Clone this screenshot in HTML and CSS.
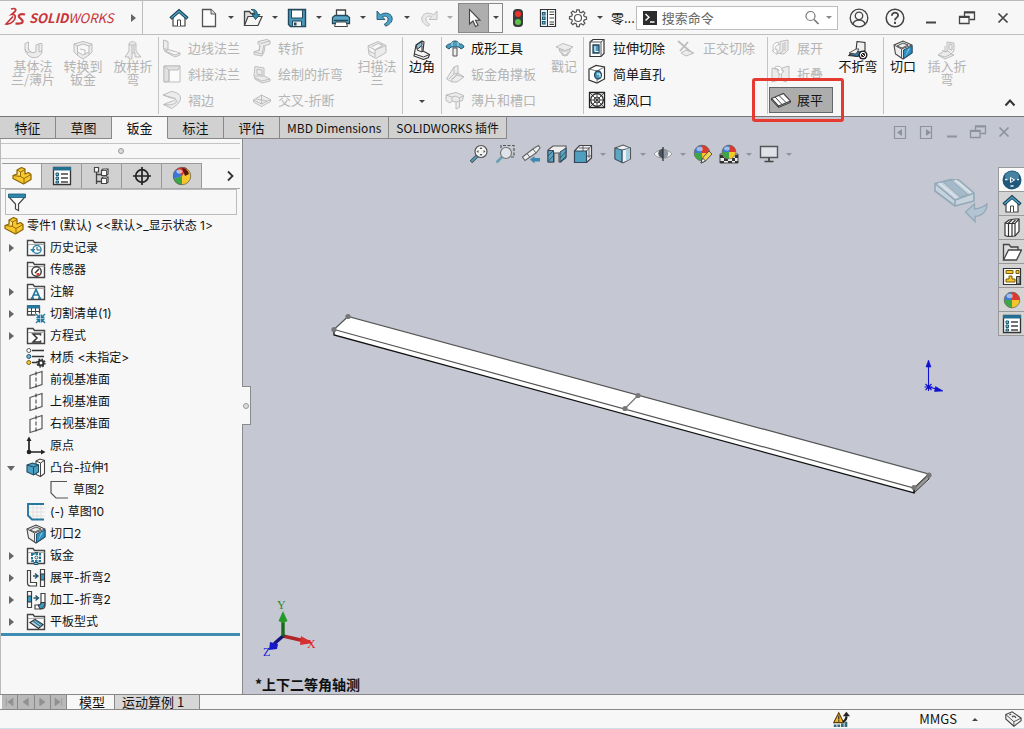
FILE: index.html
```html
<!DOCTYPE html>
<html lang="zh-CN">
<head>
<meta charset="utf-8">
<meta name="viewport" content="width=device-width, initial-scale=1">
<title>SOLIDWORKS</title>
<link rel="stylesheet" href="styles.css">
</head>
<body>
<svg class="sprite" aria-hidden="true">
  <!-- title bar -->
  <symbol id="i-home" viewBox="0 0 20 20"><path d="M4 9v9h12V9l-6-5z" fill="#fff" stroke="#444" stroke-width="1.2"/><path d="M8.500 18v-6h3v6" fill="#fff" stroke="#444"/><path d="M1.500 10.500 10 3l8.500 7.500" fill="none" stroke="#1b3f52" stroke-width="3.400"/><path d="M2.200 10 10 3.200 17.800 10" fill="none" stroke="#4a9fc4" stroke-width="1.500"/></symbol>
  <symbol id="i-new" viewBox="0 0 20 20"><path d="M3.500 1.500h8.500l4.500 4.500v12.500h-13z" fill="#fcfcfc" stroke="#555" stroke-width="1.300"/><path d="M12 1.500V6h4.500" fill="#ddd" stroke="#555"/></symbol>
  <symbol id="i-open" viewBox="0 0 20 20"><path d="M1.500 17.500V3.500h5l1.500 2h4v3" fill="#ddd" stroke="#444" stroke-width="1.300"/><path d="M1.500 17.500 5 8.500h14l-4 9z" fill="#f5f5f5" stroke="#444" stroke-width="1.200"/><path d="M8 1.500c4-.5 6 1 6.500 5h2.500l-4.500 5L9 6.500h2.500C11.500 4 10.500 2.500 8 1.500z" fill="#2f8ab0" stroke="#173f52" stroke-width=".8"/></symbol>
  <symbol id="i-save" viewBox="0 0 20 20"><path d="M1.500 1.500h17v17h-15l-2-2z" fill="#4799ba" stroke="#24495c" stroke-width="1.400"/><path d="M4.500 2h11v8h-11z" fill="#fff" stroke="#24495c"/><path d="M5.500 13h9v5.500h-9z" fill="#eee" stroke="#24495c"/><path d="M7 14.500h2.500v3H7z" fill="#24495c"/></symbol>
  <symbol id="i-print" viewBox="0 0 20 20"><path d="M5.500 9V2h9v7" fill="#fff" stroke="#444" stroke-width="1.300"/><path d="M1.500 9.500 4 7.500h12l2.500 2v6h-17z" fill="#5aa9c8" stroke="#24495c" stroke-width="1.300"/><path d="M3 12.500h14" stroke="#24495c" stroke-width="1.500"/><path d="m5 14-1.500 4.500h13L15 14z" fill="#fff" stroke="#444"/></symbol>
  <symbol id="i-undo" viewBox="0 0 20 20"><path d="M2 3v8.500h8L7.400 8.800c3-1.600 6.200.2 5.600 3.200-.3 1.800-2 3.200-3.600 4l1.200 2.200c4-1.500 6.600-4.200 6.600-7.400 0-5-6.200-7.600-11.800-4z" fill="#4ba3c7" stroke="#24556b" stroke-width=".9"/></symbol>
  <symbol id="i-redo" viewBox="0 0 20 20"><path d="M18 3v8.500h-8l2.600-2.700c-3-1.600-6.200.2-5.600 3.200.3 1.800 2 3.200 3.600 4l-1.200 2.200c-4-1.500-6.600-4.200-6.600-7.400 0-5 6.200-7.600 11.800-4z" fill="#e8e8e8" stroke="#c2c2c2"/></symbol>
  <symbol id="i-cursor" viewBox="0 0 20 20"><path d="M5.500 1.500v14.500l3.500-3 2.500 5.500 2.500-1.200-2.500-5h4.500z" fill="#fff" stroke="#444" stroke-width="1.100"/></symbol>
  <symbol id="i-traffic" viewBox="0 0 20 20"><rect x="5" y="1" width="10" height="18" rx="4" fill="#3c3c3c"/><circle cx="10" cy="6" r="3" fill="#f0322a"/><circle cx="10" cy="14" r="3" fill="#5cc24b"/></symbol>
  <symbol id="i-list" viewBox="0 0 20 20"><path d="M2.500 1.500h15v17h-15z" fill="#fff" stroke="#333" stroke-width="1.200"/><path d="M3 2h6v16H3z" fill="#e2eff5"/><path d="M9.500 2v16" stroke="#333"/><path d="M4.500 4.500H7V7H4.500zM4.500 9H7v2.500H4.500zM4.500 13.500H7V16H4.500z" fill="#8cc4da" stroke="#1c5874" stroke-width="1.200"/><path d="M11.500 4h4.500M11.500 6.500h4.500M11.500 10h4.500M11.500 14h4.500M11.500 16.300h4.500" stroke="#444" stroke-width="1.200"/></symbol>
  <symbol id="i-gear" viewBox="0 0 20 20"><path d="m8.400 4 .4-2.200h2.400l.4 2.200 1.700.7 1.900-1.300 1.700 1.700-1.300 1.900.7 1.600 2.200.5v2.200l-2.200.5-.7 1.600 1.300 1.900-1.700 1.700-1.900-1.300-1.700.7-.4 2.200H8.800L8.400 16l-1.700-.7-1.900 1.300-1.700-1.700 1.300-1.900-.7-1.600-2.200-.5V8.700l2.200-.5.700-1.600-1.300-1.900 1.700-1.700 1.900 1.300z" fill="#fff" stroke="#555" stroke-width="1.200"/><circle cx="10" cy="10" r="3.500" fill="#fff" stroke="#555" stroke-width="1.200"/></symbol>
  <symbol id="i-prompt" viewBox="0 0 14 14"><path d="M0 0h14v14H0z" fill="#2d2d2d"/><path d="m2.500 3 3.500 3.300L2.500 9.600M7 11h4.500" fill="none" stroke="#fff" stroke-width="1.400"/></symbol>
  <symbol id="i-search" viewBox="0 0 16 16"><circle cx="6.500" cy="6" r="4.500" fill="none" stroke="#777" stroke-width="1.200"/><path d="m10 9.500 4.500 4.500" stroke="#777" stroke-width="1.700"/></symbol>
  <symbol id="i-user" viewBox="0 0 20 20"><circle cx="10" cy="10" r="8" fill="none" stroke="#444" stroke-width="1.200"/><circle cx="10" cy="8" r="3.400" fill="none" stroke="#444" stroke-width="1.200"/><path d="M4.500 16c.5-3.500 3-4 5.500-4s5 .5 5.500 4" fill="none" stroke="#444" stroke-width="1.200"/></symbol>
  <symbol id="i-help" viewBox="0 0 20 20"><circle cx="10" cy="10" r="8" fill="none" stroke="#444" stroke-width="1.400"/><path d="M7.200 8c0-4 5.800-3.600 5.600-.3-.1 2-2.800 2-2.800 4.300M10 13.500v2" fill="none" stroke="#444" stroke-width="1.700"/></symbol>
  <symbol id="i-min" viewBox="0 0 20 20"><path d="M5 14.500h10" stroke="currentColor" stroke-width="2"/></symbol>
  <symbol id="i-restore" viewBox="0 0 20 20"><path d="M7.500 8V4.500h10v7h-5" fill="none" stroke="currentColor" stroke-width="1.300"/><path d="M7 4.300h11" stroke="currentColor" stroke-width="2"/><path d="M2.500 8.500h9.500v7H2.500z" fill="none" stroke="currentColor" stroke-width="1.300"/><path d="M2 9h10.500" stroke="currentColor" stroke-width="2"/></symbol>
  <symbol id="i-close" viewBox="0 0 20 20"><path d="m5.500 5.500 9 9m0-9-9 9" stroke="currentColor" stroke-width="1.700"/></symbol>
  <symbol id="i-prev" viewBox="0 0 20 20"><path d="M4.500 4.500h11v12h-11z" fill="none" stroke="currentColor" stroke-width="1.200"/><path d="M12 7v7l-5-3.500z" fill="currentColor"/></symbol>
  <symbol id="i-next" viewBox="0 0 20 20"><path d="M4.500 4.500h11v12h-11z" fill="none" stroke="currentColor" stroke-width="1.200"/><path d="M10 7v7l5-3.500z" fill="currentColor"/></symbol>

  <!-- ribbon, unavailable commands: painted by the disabled button's fill and stroke -->
  <symbol id="r-base" viewBox="0 0 20 20"><path d="M2 3.500 5.500 2v7c.5 3 4 5 7.500 2.500V5L17 3.500h2V12c-1.500 5.500-9 8-14 3-2-2-3-4-3-6z"/><path d="M5.500 2v7c2 4.500 6 4 7.500 2.500M2 9c1 3 2.500 4 4.500 3.500M16 4v8l3-1" fill="none"/></symbol>
  <symbol id="r-convert" viewBox="0 0 20 20"><path d="m1 4 9-2.500L19 4v8l-3 3-6 4-6-4-3-3z"/><path d="M4.500 6 10 4l6 2v6l-6 3-5.500-3zM1 4l3.500 2M19 4l-3 2M4.500 12v3M16 12v3M7 9l5 1v5" fill="#f7f7f7"/></symbol>
  <symbol id="r-loft" viewBox="0 0 20 20"><path d="M6 4c0-3 7-3 7 0v7l5 6h-6v-4h-3v6H6v-2H2l4-6z"/><path d="M6 4c1 1.500 6 1.500 7 0M9 5v8M11 5v8" fill="none"/></symbol>
  <symbol id="r-edge" viewBox="0 0 20 20"><path d="M1.500 2 6 3.500v8l12 3.500v2l-5 2-10-5.500-1.500-3z"/><path d="m6 11.500-4.500-.8M6 11.500 3 13.500M18 15l-5 2-10-4" fill="#fafafa"/></symbol>
  <symbol id="r-miter" viewBox="0 0 20 20"><path d="M2 2h16v16H2z" fill="#fbfbfb"/><path d="M2 2h16l-2 4H7v11l-5 1z" fill="#e2e2e2"/><path d="m2 2 5 4M7 6v12" fill="none"/></symbol>
  <symbol id="r-hem" viewBox="0 0 20 20"><path d="m1 5 8-3.500c6 .5 9.500 3 9.500 6.500 0 5-5 8-9 10.500l-8-4 9-3.500c3-1 4-2.500 1-3z"/><path d="m1 5 8 3c4 0 6 1.500 5 3.500M1.500 14.500l6 .5c4-.5 7-2 8-4" fill="none"/></symbol>
  <symbol id="r-jog" viewBox="0 0 20 20"><path d="M6 3.500 15 1.500l3 1.500v3l-5 1.500-1 6.500-2 4-8-1.500v-3l5-1 1-5.500-2-1z"/><path d="m18 3-9 2.500-2-2M12 7l-2 9-8-2M8 8l-1 5" fill="none"/></symbol>
  <symbol id="r-sketchbend" viewBox="0 0 20 20"><path d="M3 2.500 12 4v8l6 3v2l-8 2-7-4-1-3z"/><path d="m5 5 5 1v5l-5-1zM3 12l9 0M3 14l7 3 8-2" fill="none"/></symbol>
  <symbol id="r-cross" viewBox="0 0 20 20"><path d="m1.500 10 8-5 9 4.500v2l-9 5-8-4.500z"/><path d="m1.500 10 8 4 9-4.500M9.500 5v9M4 9l11 2" fill="none"/></symbol>
  <symbol id="r-swept" viewBox="0 0 20 20"><path d="m1 6 10-4.500 8 4v7l-10 6-7-4z"/><path d="m1 6 7 4v7M8 10l8-5-5-1.500L5 6.500M8 10l11-4.500M2 11l6 3" fill="#f7f7f7"/></symbol>
  <symbol id="r-gusset" viewBox="0 0 20 20"><path d="m9 3 4-1.500V9l6 4-7 5H7l-5.500-3z"/><path d="M9 3v7l-5 5M13 9l-5 6M9 10l4-1M7 18v-3l5-4 7 2" fill="none"/></symbol>
  <symbol id="r-tab" viewBox="0 0 20 20"><path d="m1 5 10-2.500 7.500 3-1 5-3 1v6l-3.500 1.500v-7l-4-1-2 2L1 10.500z"/><path d="m1 5 6 2 4-1 3 2 4.500-2M7 7v4M11 12l3.500-1V8" fill="none"/></symbol>
  <symbol id="r-stamp" viewBox="0 0 20 20"><path d="m2 7 7-3.500L19 7l-7 4z"/><path d="m5 9 4 2 7-2v3l-5 3-5-3zM8 12v3l3 1 3-1v-2" fill="#ddd"/></symbol>
  <symbol id="r-normal" viewBox="0 0 20 20"><path d="m1 3 14 12M11 4 3 13" stroke-width="1.800" fill="none"/><path d="m9 12 8 3-8 3-5-3z"/></symbol>
  <symbol id="r-unfold" viewBox="0 0 20 20"><path d="M9 3.500 17 2v10l-4 4-8-1 4-3z"/><path d="M12 5v8l-3 2M14 4v9" fill="none"/><path d="M7 4C2 5 1 9 3 12l-2 .5 5 4V11l-1.500.5C3.500 9 5 7.500 8 6.500z" fill="#fff"/></symbol>
  <symbol id="r-fold" viewBox="0 0 20 20"><path d="m1 4 7 2v10l-7 2zM11 4l7-2v12l-3 4-5-2z"/><path d="M4 3c4-2 7 0 7 4h2l-3.500 4L6 7h2c0-2-2-3-4-2z" fill="#fff"/></symbol>
  <symbol id="r-insert" viewBox="0 0 20 20"><path d="m10 2 7 1v8l-3 3 3 1-9 4-7-4 6-4 3 1z"/><path d="m12 4 3 .5V10l-3-1zM10 10l4 4-6 3-7-2M8 6v6l-3-2" fill="none"/></symbol>

  <!-- ribbon, available commands -->
  <symbol id="r-corner" viewBox="0 0 20 20"><path d="M4 5 10 1l2 1-1 9 6.500 3.500-1 3-5 2L2 16z" fill="#f4f4f4" stroke="#333" stroke-width="1.100"/><path d="M4.500 5 10 1.500v4L5 9.500z" fill="#8cc4dc" stroke="#333"/><path d="m5 10 5 2 1-1M2.500 14l9 3 6-2.500M10 12v-6" fill="none" stroke="#333"/></symbol>
  <symbol id="r-form" viewBox="0 0 20 20"><path d="M1 9c1-3 3-3 4.500-3C7 2 13 2 14.500 6 16 6 18 6 19 9l-3 2-2-2H6l-2 2z" fill="#4a9dbf" stroke="#24556b"/><path d="M7 4v4M13 4v4" stroke="#bfe1ee"/><path d="M8 10h4v8H8z" fill="#eee" stroke="#555"/></symbol>
  <symbol id="r-extrude" viewBox="0 0 20 20"><path d="m3 4 3-2.500h11v14l-3 3H3z" fill="#fff" stroke="#333" stroke-width="1.200"/><path d="M3 4h11l3-2.500M14 4v14.500" fill="none" stroke="#555"/><path d="M6 7h6v8H6z" fill="#4b9dbf" stroke="#24465a" stroke-width="1.300"/><path d="M8 8v5.500h3.500" fill="none" stroke="#fff"/></symbol>
  <symbol id="r-hole" viewBox="0 0 20 20"><path d="m2 5 7-3.500L17.500 3v12L10 19l-8-3z" fill="#fff" stroke="#333" stroke-width="1.200"/><path d="m2 5 8 2 7.500-4M10 7v12" fill="none" stroke="#666" stroke-width=".9"/><ellipse cx="11" cy="11" rx="3.400" ry="4" fill="#4b9dbf" stroke="#24465a" stroke-width="1.300"/><path d="M10 10h3v3" stroke="#fff" fill="none"/></symbol>
  <symbol id="r-vent" viewBox="0 0 20 20"><path d="M2.500 2.500h15v15h-15z" fill="#fff" stroke="#222" stroke-width="1.300"/><circle cx="10" cy="10" r="6.300" fill="none" stroke="#222" stroke-width="1.200"/><circle cx="10" cy="10" r="3" fill="none" stroke="#222" stroke-width=".8"/><path d="M10 3v14M3 10h14M3 3l14 14M17 3 3 17" stroke="#222" stroke-width=".8"/></symbol>
  <symbol id="r-flatten" viewBox="0 0 20 20"><path d="m.5 8.500 12-5L19.500 11 7.500 16z" fill="#fff" stroke="#444" stroke-width="1.100"/><path d="m.5 8.500V10l7 7.500V16M7.500 17.500l12-5V11M4 7l7 7.500M8 5.500l7.500 7.500" fill="none" stroke="#444"/></symbol>
  <symbol id="r-nobend" viewBox="0 0 20 20"><path d="m9 1.500 8 1v8l-7 6-9-1 7-5z" fill="#f0f0f0" stroke="#333" stroke-width="1.100"/><path d="m1 14.500 7-3 6 .5-5 4.500z" fill="#2f7faf" stroke="#333"/><path d="m1 13 7-4h3l-3 5z" fill="#eee" stroke="#333" stroke-width=".8"/><circle cx="15" cy="15" r="4.500" fill="#222"/><circle cx="15" cy="15" r="2.700" fill="none" stroke="#fff"/><path d="m13 13 4 4" stroke="#fff"/></symbol>
  <symbol id="r-rip" viewBox="0 0 20 20"><path d="m1 5 9-4 9 4v8l-9 6-7.500-5z" fill="#eee" stroke="#444" stroke-width="1.100"/><path d="m1 5 7.500 4L19 5M8.500 9v9M4 6l6-3 5 2-6 3z" fill="#ddd" stroke="#555"/><path d="M10.500 18.500V10L19 6v7z" fill="#2f8fbe" stroke="#1f5573"/><path d="m12 17 3-8 2-.8z" fill="#8cc8e2"/></symbol>

  <!-- feature manager -->
  <symbol id="t-part" viewBox="0 0 20 20"><path d="m5 4 4.500-2.500L13 3v5l3.500-1.500L19 8.500v5L11.500 18 1 12.500V9.500L5 8z" fill="#f7c72e" stroke="#8a6208" stroke-width="1.200" stroke-linejoin="round"/><path d="m5 4 3.500 2L13 3.500M8.500 6v4.500l3.500 2L19 8.500M12 12.500v5M1 9.500 8.500 10.500" fill="none" stroke="#8a6208" stroke-width=".9"/><path d="m6 5 2 1.200v3L6 8.500z" fill="#fde58a"/></symbol>
  <symbol id="t-props" viewBox="0 0 20 20"><path d="M1.500 1.500h17v17h-17z" fill="#fff" stroke="#333" stroke-width="1.300"/><path d="M1 1h18v3.500H1z" fill="#236f92"/><path d="M4 7h2.500v2.500H4zM4 11h2.500v2.500H4zM4 15h2.500v2H4z" fill="#8cc4da" stroke="#1c5874"/><path d="M9 8h7M9 12h7M9 16h7" stroke="#444" stroke-width="1.300"/></symbol>
  <symbol id="t-config" viewBox="0 0 20 20"><path d="M4.500 6v12M4.500 8.500H10M4.500 15.500H10" fill="none" stroke="#444" stroke-width="1.300"/><path d="M2.500 1.500h4V6h-4zM9.500 4.500 11 3h5v5l-1.500 1.500h-5zM9.500 12.500 11 11h5v5l-1.500 1.500h-5z" fill="#fff" stroke="#444" stroke-width="1.200"/><path d="M9.500 4.500h5v5M14.500 4.500 16 3M9.500 12.500h5v5M14.500 12.500 16 11" fill="none" stroke="#444" stroke-width=".9"/></symbol>
  <symbol id="t-dim" viewBox="0 0 20 20"><circle cx="10" cy="10" r="6.300" fill="none" stroke="#222" stroke-width="1.700"/><path d="M10 1v18M1 10h18" stroke="#222" stroke-width="1.700"/></symbol>
  <symbol id="t-ball" viewBox="0 0 20 20"><circle cx="10" cy="10" r="9" fill="#f5c72b"/><path d="M3.500 4A9 9 0 0 1 15 2.500L10 10z" fill="#d8322c"/><path d="M10 10v9a9 9 0 0 1-8.500-6z" fill="#3aa648"/><path d="M1.500 13A9 9 0 0 1 5 3l5 7z" fill="#3b76d8"/><path d="M10 2a8 8 0 0 1 7 6l-4 2z" fill="#5c1712"/><circle cx="10" cy="10" r="8.700" fill="none" stroke="#666" stroke-width=".8"/><ellipse cx="7.500" cy="5.500" rx="3" ry="2" fill="#fff" opacity=".6"/></symbol>
  <symbol id="t-globe" viewBox="0 0 20 20"><circle cx="10" cy="10" r="8.800" fill="#f3c62a"/><path d="M10 10V1.200A8.800 8.800 0 0 0 1.200 10z" fill="#3f7ad6"/><path d="M10 10V1.200A8.800 8.800 0 0 1 18.800 10z" fill="#dc3a30"/><path d="M10 10H1.200A8.800 8.800 0 0 0 10 18.800z" fill="#3ca648"/><circle cx="10" cy="10" r="8.700" fill="none" stroke="#666" stroke-width=".8"/><ellipse cx="7.500" cy="5.500" rx="3.500" ry="2.500" fill="#fff" opacity=".5"/></symbol>
  <symbol id="t-filter" viewBox="0 0 20 20"><path d="M2 3h16v2l-6.500 7v6.500l-3-1.500v-5L2 5z" fill="#fff" stroke="#444" stroke-width="1.200"/><path d="M1.500 2h17v3.500h-17z" fill="#2e87ae" stroke="#1c5874" stroke-width=".8"/></symbol>
  <symbol id="t-folder" viewBox="0 0 20 20"><path d="M1.500 17.500v-15H7l1.500 2h10v13z" fill="#fafafa" stroke="#444" stroke-width="1.400"/><path d="M2 6.500h16.500" stroke="#aaa"/></symbol>
  <symbol id="t-history" viewBox="0 0 20 20"><use href="#t-folder"/><circle cx="11" cy="11.500" r="4" fill="#fff" stroke="#2e87ae" stroke-width="1.500"/><path d="M11 9v3h3" stroke="#24556b" fill="none"/><path d="m4 11 3 3.500 2.500-3.500z" fill="#2e87ae"/></symbol>
  <symbol id="t-sensor" viewBox="0 0 20 20"><use href="#t-folder"/><circle cx="10.500" cy="11.500" r="4.700" fill="#fff" stroke="#333" stroke-width="1.400"/><path d="m9 13 4-4" stroke="#333" stroke-width="1.500"/><path d="M10.500 13h3v2.500h-3z" fill="#d84a35"/></symbol>
  <symbol id="t-note" viewBox="0 0 20 20"><use href="#t-folder"/><path d="M6 16.200 10 7.500l4 8.700M7.500 13h5M4.800 16.200H8M12 16.200h3.200" fill="none" stroke="#24789d" stroke-width="1.600"/></symbol>
  <symbol id="t-cutlist" viewBox="0 0 20 20"><path d="M1.500 2h12v9h-12z" fill="#fff" stroke="#444" stroke-width="1.300"/><path d="M1 1h13v3.500H1z" fill="#24789d"/><path d="M1.500 7.500h12M5.500 4v7M9.500 4v7" stroke="#444"/><path d="M9.500 9.500H19V19H9.500z" fill="#f7f7f7"/><path d="m10 10 3.500 3.500m0-3v3h-3M19 10l-3.500 3.500m0-3v3h3M10 19l3.500-3.500m0 3v-3h-3M19 19l-3.500-3.500m0 3v-3h3" fill="none" stroke="#24789d" stroke-width="1.400"/></symbol>
  <symbol id="t-sigma" viewBox="0 0 20 20"><use href="#t-folder"/><path d="M14.500 9.500V8H7l4 4-4 4h7.500v-1.500" fill="none" stroke="#333" stroke-width="1.500"/></symbol>
  <symbol id="t-material" viewBox="0 0 20 20"><path d="M6 2.500h12M6 8.500h12M6 14.500h5" stroke="#333" stroke-width="1.700"/><circle cx="2.800" cy="2.500" r="2" fill="#fff" stroke="#555"/><circle cx="2.800" cy="8.500" r="2" fill="#6bb8d8" stroke="#24556b"/><circle cx="2.800" cy="14.500" r="2" fill="#f0ca3a" stroke="#7a6010"/><circle cx="15" cy="15" r="2.500" fill="#fff" stroke="#333" stroke-width="2.200"/><circle cx="15" cy="15" r="4" fill="none" stroke="#333" stroke-width="1.300" stroke-dasharray="1.600 1.540"/></symbol>
  <symbol id="t-plane" viewBox="0 0 20 20"><path d="M4 5.500 16 1.500v13L4 18.500z" fill="#fbfbfb" stroke="#555" stroke-width="1.200"/><path d="M10 1.500v17" stroke="#333" stroke-dasharray="4 2"/></symbol>
  <symbol id="t-origin" viewBox="0 0 20 20"><path d="M3 3v13h13" fill="none" stroke="#222" stroke-width="1.700"/><path d="M.5 5 3 .5 5.500 5zM15 13.500l4.500 2.500-4.500 2.500z" fill="#222"/><circle cx="3" cy="16" r="2.300" fill="#222"/></symbol>
  <symbol id="t-boss" viewBox="0 0 20 20"><path d="m10 3 4-2 4.500 1.500v13l-4 3-4.500-2z" fill="#fafafa" stroke="#444" stroke-width="1.100"/><path d="m10 3 4.500 2v13M14.500 5l4-2.500" fill="none" stroke="#444"/><path d="m1 7 5.500-2L12.500 7v7l-5 3L1 14z" fill="#4ba0c4" stroke="#1f4c60" stroke-width="1.100"/><path d="m1 7 6.500 2 5-2M7.500 9v8" fill="none" stroke="#1f4c60"/></symbol>
  <symbol id="t-sketch" viewBox="0 0 20 20"><path d="M18 1.500H2v11.500l5 5h12" fill="none" stroke="#555" stroke-width="1.200"/></symbol>
  <symbol id="t-sketchactive" viewBox="0 0 20 20"><path d="M7 3v14M11 3v14M15 3v14M3 6h16M3 10h16M3 14h16" stroke="#e1e1e1"/><path d="M18 2H2v11.500l4 4h12" fill="none" stroke="#24789d" stroke-width="1.900"/></symbol>
  <symbol id="t-sheet" viewBox="0 0 20 20"><use href="#t-folder"/><path d="M6 8h8v7H6z" fill="#fff" stroke="#24789d" stroke-width="2" stroke-dasharray="2.500 1"/><circle cx="10.500" cy="11.500" r="1.500" fill="none" stroke="#24556b"/><path d="M8 16.500h4v2H8zM9 8V6.500h3" fill="#8cc4da" stroke="#24556b"/></symbol>
  <symbol id="t-unbend" viewBox="0 0 20 20"><path d="M1.500 2.500h3v12h6v3.500H4.500c-2 0-3-1-3-3z" fill="#fff" stroke="#444" stroke-width="1.200"/><path d="M7 8h4m-2-2.500L12 8l-3 2.500" fill="none" stroke="#24556b" stroke-width="1.400"/><path d="M14.500 1.500h4v17h-4z" fill="#fff" stroke="#444" stroke-width="1.200"/><path d="M14.500 6h4v6h-4z" fill="#3b97bd" stroke="#333"/></symbol>
  <symbol id="t-process" viewBox="0 0 20 20"><path d="M1.500 1.500h4v16h-4z" fill="#fff" stroke="#444" stroke-width="1.200"/><path d="M1.500 6h4v6h-4z" fill="#3b97bd" stroke="#333"/><path d="M7.500 8h4m-2-2.500 3 2.500-3 2.500" fill="none" stroke="#24556b" stroke-width="1.400"/><path d="M15 3.500h4v12c0 2-1.500 3.500-4 3.500H9v-4h4c1.500 0 2-.5 2-2z" fill="#fff" stroke="#444" stroke-width="1.200"/><path d="M12 15c2 0 3-.5 3-2.500h4c0 4-2 6-5 6.500z" fill="#3b97bd" stroke="#333"/></symbol>
  <symbol id="t-flat" viewBox="0 0 20 20"><use href="#t-folder"/><path d="M4 10.500 9 7.500l8 5-4.500 4z" fill="#b9d4e0" stroke="#333" stroke-width="1.200"/><path d="m7 9 7.500 5.500M9.500 8.500l6 4" stroke="#24789d" stroke-width="1.300"/></symbol>

  <!-- view toolbar -->
  <symbol id="v-fit" viewBox="0 0 20 20"><path d="m8 12-6 6" stroke="#444" stroke-width="3.400"/><path d="m8 12-5.500 5.500" stroke="#4f9dbb" stroke-width="2"/><circle cx="12" cy="7.500" r="6" fill="#f4f4f4" stroke="#555" stroke-width="1.200"/><path d="m10.500 5 1.500-2 1.500 2zM10.500 10l1.500 2 1.500-2zM9.500 6l-2 1.500 2 1.500zM14.500 6l2 1.500-2 1.500z" fill="#555"/></symbol>
  <symbol id="v-area" viewBox="0 0 20 20"><path d="M6 4V1.500h13V13h-3" fill="none" stroke="#555" stroke-width="1.200" stroke-dasharray="3 1.500"/><path d="m7 13-5.500 5.500" stroke="#6b9fb4" stroke-width="2.600"/><circle cx="11" cy="9" r="5.500" fill="#dfe3ea" stroke="#777" stroke-width="1.200"/></symbol>
  <symbol id="v-prev" viewBox="0 0 20 20"><path d="m1.500 13 11-8.500 5-3 1.500 2.500-4 5-11 7.500z" fill="#eee" stroke="#666" stroke-width="1.100"/><path d="m12 5 3 4M6 9.500l3 4" stroke="#666"/><path d="M9 15.500 13.500 12v2H19v3.500h-5.500v2z" fill="#3d88b0"/></symbol>
  <symbol id="v-section" viewBox="0 0 20 20"><path d="m1 6 5-4h13v10l-5 6h-2V9H7v9H1z" fill="#eee" stroke="#555" stroke-width="1.100"/><path d="M1 6.500h5.500V18H1zM13 8l6-4v10l-6 4z" fill="#5aa4c1" stroke="#345"/><path d="m1 12 5-5M1.500 17l5-5.500M13 14l6-6.500M14 17l5-5" stroke="#234b5c" stroke-width=".8"/></symbol>
  <symbol id="v-orient" viewBox="0 0 20 20"><path d="m1.500 7 5-5.500h12V14l-5 4.500" fill="#eef0f4" stroke="#444" stroke-width="1.200"/><path d="M1.500 7h12v11.500h-12z" fill="#4fa0be" stroke="#345" stroke-width="1.200"/><path d="m13.500 7 5-5.500M10 2v5M6 4h10v10M13.500 12h5" stroke="#444" stroke-width=".8" fill="none"/></symbol>
  <symbol id="v-style" viewBox="0 0 20 20"><path d="m2 4 8-3 7.500 3v11L10 19l-8-4z" fill="#eef1f4" stroke="#555" stroke-width="1.100"/><path d="M2 4l7 2v12.500L2 15z" fill="#5ba8c4" stroke="#456"/><path d="m9 6 8.500-2M9 6v13" stroke="#456" fill="none"/><path d="M13 5v12l4-2V4z" fill="#a9d0df"/></symbol>
  <symbol id="v-eye" viewBox="0 0 20 20"><path d="M1 10c4-5.500 14-5.500 18 0-4 5.500-14 5.500-18 0z" fill="#f0f1f4" stroke="#999"/><circle cx="10" cy="9.500" r="4.700" fill="#4b5560"/><path d="M10 3v14" stroke="#333" stroke-width="1.300"/><path d="M10.700 5a4.500 4.500 0 0 1 0 9z" fill="#8d96a1"/></symbol>
  <symbol id="v-edit" viewBox="0 0 20 20"><use href="#t-globe" width="18" height="18"/><path d="m8 19 1.500-5L16 7l3 3-6.500 7z" fill="#f4d558" stroke="#555"/><path d="m8 19 1.500-5 3 3z" fill="#fff" stroke="#444"/></symbol>
  <symbol id="v-scene" viewBox="0 0 20 20"><path d="M1 10h18v9H1z" fill="#eee" stroke="#444"/><path d="M1 11h4v3H1zM16 11h3v3h-3zM5 14h4v3H5zM13 14h3v3h-3zM1 17h4v2H1zM9 17h4v2H9zM16 17h3v2h-3z" fill="#333"/><use href="#t-globe" x="2" width="16" height="16"/></symbol>
  <symbol id="v-monitor" viewBox="0 0 20 20"><path d="M1.500 2.500h17v11h-17z" fill="#dfe3e8" stroke="#555" stroke-width="1.400"/><path d="M10 14v3M5.500 17.500h9" stroke="#444" stroke-width="1.700"/></symbol>

  <!-- task pane -->
  <symbol id="p-3dx" viewBox="0 0 20 20"><circle cx="10" cy="10" r="9.500" fill="#1f587a"/><ellipse cx="10" cy="6" rx="7" ry="4.500" fill="#5f9dbb" opacity=".6"/><path d="M8.500 7.500v5l4-2.500z" fill="none" stroke="#fff"/><path d="M3 9.500h2.500M15 9.500h2M8.500 16h3" stroke="#e5f1f7" stroke-width="1.400"/></symbol>
  <symbol id="p-books" viewBox="0 0 20 20"><path d="M3 5 7 2l3-.5 3-.5h4v12.500L13 18l-7 .5-3-1z" fill="#fff" stroke="#333" stroke-width="1.200"/><path d="m3 5 3 .5L10 2M6.500 5.500v13M6.500 5.500H10L13.500 2M10 5.500v13M10 5.500h3L17 1M13 5.500V18" fill="none" stroke="#333" stroke-width="1.200"/></symbol>
  <symbol id="p-folder" viewBox="0 0 20 20"><path d="M1.500 18V2.500H7L9 5h7v3" fill="#ddd" stroke="#444" stroke-width="1.300"/><path d="m1.500 18 5-10h13l-5 10z" fill="#fff" stroke="#444" stroke-width="1.300"/></symbol>
  <symbol id="p-palette" viewBox="0 0 20 20"><path d="M1.500 2.500h17v16h-17z" fill="#fff" stroke="#333" stroke-width="1.200"/><path d="M4 4.500h7v3H4zM14 4.500h3v3h-3zM7 10h3v3h3v3H4v-3h3z" fill="#f5c72b" stroke="#7a5c08"/><path d="M14.500 10.500H18v7.500h-3.500z" fill="#aaa" stroke="#333"/></symbol>
  <symbol id="p-flat" viewBox="0 0 54 46"><path d="M1 5.500 17 1.500l8 .5 15 13v8L21 28 1 13z" fill="#c6d2dc" stroke="#93a9b8" stroke-width="1.600" stroke-linejoin="round"/><path d="m1 5.500 20 16.500 19-7M21 22v6" fill="none" stroke="#93a9b8" stroke-width="1.600"/><path d="m9 4 8-2 17 14.500-8 2.500z" fill="#a5bac8" stroke="#93a9b8"/><path d="m5 5 18 15M21 2l16 13" stroke="#e0e7ed" stroke-width="1.300"/><path d="M53 26c0 7-5 12-12 12.500v5l-9.500-9.500 9-8v5c5-.5 9-2 12.500-5z" fill="#b3c5d2" stroke="#93a9b8" stroke-width="1.400"/></symbol>

  <!-- status bar -->
  <symbol id="s-warn" viewBox="0 0 20 20"><path d="M2 19v-3h3v3zM6 19v-3h3v3zM10 19v-4h3v4zM14 19v-6h3v6z" fill="#346a80"/><path d="M2 14 7.500 3 13 14z" fill="#f3b52b" stroke="#5a3d08" stroke-width="1.200"/><path d="M7.500 6.500v4M7.500 11.500v1.500" stroke="#333" stroke-width="1.400"/><path d="M12 13c3-1 4-3 4-6" fill="none" stroke="#222" stroke-width="2.500"/><path d="m12 7 4-5 4 5z" fill="#222"/></symbol>
  <symbol id="s-tag" viewBox="0 0 20 20"><path d="m2 5 7-3 10 7v3l-8 6L2 10z" fill="#f2f2f2" stroke="#444" stroke-width="1.200"/><path d="m2 5 9 8 8-4M11 13v5" fill="none" stroke="#444"/><path d="m6 5.500 2-1M9 8c1-2 4-1 4 1" fill="none" stroke="#444" stroke-width="1.300"/></symbol>
</svg>

<header class="titlebar">
  <div class="brand">
    <svg class="ds" viewBox="0 0 24 24" aria-hidden="true"><path d="M7 3c5-1.500 6 1 3 3.500L7.500 8.500C12 8 12.500 12 9 15.500 6 18.500 2 18 2 18l7-7.500" fill="none" stroke="#c8343a" stroke-width="1.700"/><path d="M21 8.500c-4-1-7 0-6 2.500l3.500 3.500c1 3-3 3.500-7 3" fill="none" stroke="#c8343a" stroke-width="2.200"/></svg>
    <span class="wordmark"><b>SOLID</b>WORKS</span>
    <button class="brand-more" aria-label="菜单"><i class="tri-right"></i></button>
  </div>
  <nav class="quick">
    <button class="q" aria-label="主页"><svg class="ico"><use href="#i-home"/></svg></button>
    <span class="pair"><button class="q" aria-label="新建"><svg class="ico"><use href="#i-new"/></svg></button><button class="drop" aria-label="更多"><i class="caret"></i></button></span>
    <span class="pair"><button class="q" aria-label="打开"><svg class="ico"><use href="#i-open"/></svg></button><button class="drop" aria-label="更多"><i class="caret"></i></button></span>
    <span class="pair"><button class="q" aria-label="保存"><svg class="ico"><use href="#i-save"/></svg></button><button class="drop" aria-label="更多"><i class="caret"></i></button></span>
    <span class="pair"><button class="q" aria-label="打印"><svg class="ico"><use href="#i-print"/></svg></button><button class="drop" aria-label="更多"><i class="caret"></i></button></span>
    <span class="pair"><button class="q" aria-label="撤消"><svg class="ico"><use href="#i-undo"/></svg></button><button class="drop" aria-label="更多"><i class="caret"></i></button></span>
    <span class="pair"><button class="q" aria-label="重做" disabled><svg class="ico"><use href="#i-redo"/></svg></button><button class="drop drop-slim" aria-label="更多" disabled><i class="caret"></i></button></span>
    <span class="select-tool"><button class="select-main" aria-label="选择"><svg class="ico"><use href="#i-cursor"/></svg></button><button class="select-drop" aria-label="更多"><i class="caret"></i></button></span>
    <button class="wide" aria-label="重建模型"><svg class="ico"><use href="#i-traffic"/></svg></button>
    <button class="wide" aria-label="文件属性"><svg class="ico"><use href="#i-list"/></svg></button>
    <button class="wide" aria-label="选项"><svg class="ico"><use href="#i-gear"/></svg></button>
    <button class="gear-drop" aria-label="更多"><i class="caret"></i></button>
  </nav>
  <span class="docname">零...</span>
  <div class="search">
    <svg class="ico-14"><use href="#i-prompt"/></svg>
    <input type="text" placeholder="搜索命令" aria-label="搜索命令">
    <svg class="ico-16"><use href="#i-search"/></svg>
    <button class="search-drop" aria-label="更多"><i class="caret"></i></button>
  </div>
  <div class="window-buttons">
    <button aria-label="登录"><svg class="ico-22"><use href="#i-user"/></svg></button>
    <button aria-label="帮助"><svg class="ico-22"><use href="#i-help"/></svg></button>
    <button aria-label="最小化"><svg class="ico"><use href="#i-min"/></svg></button>
    <button aria-label="还原"><svg class="ico"><use href="#i-restore"/></svg></button>
    <button aria-label="关闭"><svg class="ico"><use href="#i-close"/></svg></button>
  </div>
</header>

<section class="ribbon" aria-label="钣金">
  <div class="group lead">
    <button class="big" disabled><svg class="ico"><use href="#r-base"/></svg>基体法<br>兰/薄片</button>
    <button class="big" disabled><svg class="ico"><use href="#r-convert"/></svg>转换到<br>钣金</button>
    <button class="big" disabled><svg class="ico"><use href="#r-loft"/></svg>放样折<br>弯</button>
  </div>
  <div class="group">
    <div class="stack">
      <button class="small" disabled><svg class="ico"><use href="#r-edge"/></svg>边线法兰</button>
      <button class="small" disabled><svg class="ico"><use href="#r-miter"/></svg>斜接法兰</button>
      <button class="small" disabled><svg class="ico"><use href="#r-hem"/></svg>褶边</button>
    </div>
    <div class="stack stack-wide">
      <button class="small" disabled><svg class="ico"><use href="#r-jog"/></svg>转折</button>
      <button class="small" disabled><svg class="ico"><use href="#r-sketchbend"/></svg>绘制的折弯</button>
      <button class="small" disabled><svg class="ico"><use href="#r-cross"/></svg>交叉-折断</button>
    </div>
    <button class="big" disabled><svg class="ico"><use href="#r-swept"/></svg>扫描法<br>兰</button>
  </div>
  <div class="group flush">
    <button class="big big-slim"><svg class="ico"><use href="#r-corner"/></svg>边角<i class="caret caret-end"></i></button>
  </div>
  <div class="group">
    <div class="stack stack-wide">
      <button class="small"><svg class="ico"><use href="#r-form"/></svg>成形工具</button>
      <button class="small" disabled><svg class="ico"><use href="#r-gusset"/></svg>钣金角撑板</button>
      <button class="small" disabled><svg class="ico"><use href="#r-tab"/></svg>薄片和槽口</button>
    </div>
    <button class="big big-slim" disabled><svg class="ico"><use href="#r-stamp"/></svg>戳记</button>
  </div>
  <div class="group">
    <div class="stack">
      <button class="small"><svg class="ico"><use href="#r-extrude"/></svg>拉伸切除</button>
      <button class="small"><svg class="ico"><use href="#r-hole"/></svg>简单直孔</button>
      <button class="small"><svg class="ico"><use href="#r-vent"/></svg>通风口</button>
    </div>
    <div class="stack">
      <button class="small" disabled><svg class="ico"><use href="#r-normal"/></svg>正交切除</button>
    </div>
  </div>
  <div class="group fold">
    <div class="stack stack-slim">
      <button class="small" disabled><svg class="ico"><use href="#r-unfold"/></svg>展开</button>
      <button class="small" disabled><svg class="ico"><use href="#r-fold"/></svg>折叠</button>
      <button class="small pressed" aria-pressed="true"><svg class="ico"><use href="#r-flatten"/></svg>展平</button>
      <span class="highlight"></span>
    </div>
    <button class="big"><svg class="ico"><use href="#r-nobend"/></svg>不折弯</button>
  </div>
  <div class="group flush last">
    <button class="big big-slim"><svg class="ico"><use href="#r-rip"/></svg>切口</button>
    <button class="big" disabled><svg class="ico"><use href="#r-insert"/></svg>插入折<br>弯</button>
  </div>
  <button class="collapse" aria-label="折叠功能区"><svg class="ico-14" viewBox="0 0 14 14"><path d="m2.500 9.500 4.500-5 4.500 5" fill="none" stroke="#333" stroke-width="2"/></svg></button>
</section>

<div class="workspace">
  <div class="tabrow">
    <nav class="tabs">
      <button>特征</button><button>草图</button><button class="active">钣金</button><button>标注</button><button>评估</button><button class="tab-wide">MBD Dimensions</button><button class="tab-wide">SOLIDWORKS 插件</button>
    </nav>
    <div class="doc-buttons">
      <button aria-label="上一窗格"><svg class="ico"><use href="#i-prev"/></svg></button>
      <button aria-label="下一窗格"><svg class="ico"><use href="#i-next"/></svg></button>
      <button aria-label="最小化文档"><svg class="ico"><use href="#i-min"/></svg></button>
      <button aria-label="还原文档"><svg class="ico"><use href="#i-restore"/></svg></button>
      <button aria-label="关闭文档"><svg class="ico"><use href="#i-close"/></svg></button>
    </div>
  </div>

  <main class="split">
    <aside class="panel">
      <div class="grip"><i class="dot"></i></div>
      <div class="panel-tabs">
        <button class="active" aria-label="特征管理器"><svg class="ico"><use href="#t-part"/></svg></button>
        <button aria-label="属性管理器"><svg class="ico"><use href="#t-props"/></svg></button>
        <button aria-label="配置管理器"><svg class="ico"><use href="#t-config"/></svg></button>
        <button aria-label="尺寸管理器"><svg class="ico"><use href="#t-dim"/></svg></button>
        <button aria-label="显示管理器"><svg class="ico"><use href="#t-ball"/></svg></button>
        <button class="more" aria-label="更多"><svg class="ico-14" viewBox="0 0 14 14"><path d="m5 2.500 4.500 4.500L5 11.500" fill="none" stroke="#333" stroke-width="1.800"/></svg></button>
      </div>
      <div class="filter"><svg class="ico"><use href="#t-filter"/></svg><input type="text" aria-label="过滤器"></div>
      <div class="root"><svg class="ico"><use href="#t-part"/></svg>零件1 (默认) &lt;&lt;默认&gt;_显示状态 1&gt;</div>
      <ul class="tree">
        <li><button class="twist" aria-label="展开"><i class="tri-right"></i></button><svg class="ico"><use href="#t-history"/></svg>历史记录</li>
        <li><i class="twist"></i><svg class="ico"><use href="#t-sensor"/></svg>传感器</li>
        <li><button class="twist" aria-label="展开"><i class="tri-right"></i></button><svg class="ico"><use href="#t-note"/></svg>注解</li>
        <li><button class="twist" aria-label="展开"><i class="tri-right"></i></button><svg class="ico"><use href="#t-cutlist"/></svg>切割清单(1)</li>
        <li><button class="twist" aria-label="展开"><i class="tri-right"></i></button><svg class="ico"><use href="#t-sigma"/></svg>方程式</li>
        <li><i class="twist"></i><svg class="ico"><use href="#t-material"/></svg>材质 &lt;未指定&gt;</li>
        <li><i class="twist"></i><svg class="ico"><use href="#t-plane"/></svg>前视基准面</li>
        <li><i class="twist"></i><svg class="ico"><use href="#t-plane"/></svg>上视基准面</li>
        <li><i class="twist"></i><svg class="ico"><use href="#t-plane"/></svg>右视基准面</li>
        <li><i class="twist"></i><svg class="ico"><use href="#t-origin"/></svg>原点</li>
        <li><button class="twist" aria-label="收起"><i class="caret caret-tree"></i></button><svg class="ico"><use href="#t-boss"/></svg>凸台-拉伸1</li>
        <li class="child"><i class="twist"></i><svg class="ico"><use href="#t-sketch"/></svg>草图2</li>
        <li><i class="twist"></i><svg class="ico"><use href="#t-sketchactive"/></svg>(-) 草图10</li>
        <li><i class="twist"></i><svg class="ico"><use href="#r-rip"/></svg>切口2</li>
        <li><button class="twist" aria-label="展开"><i class="tri-right"></i></button><svg class="ico"><use href="#t-sheet"/></svg>钣金</li>
        <li><button class="twist" aria-label="展开"><i class="tri-right"></i></button><svg class="ico"><use href="#t-unbend"/></svg>展平-折弯2</li>
        <li><button class="twist" aria-label="展开"><i class="tri-right"></i></button><svg class="ico"><use href="#t-process"/></svg>加工-折弯2</li>
        <li><button class="twist" aria-label="展开"><i class="tri-right"></i></button><svg class="ico"><use href="#t-flat"/></svg>平板型式</li>
      </ul>
      <div class="rollback"></div>
    </aside>

    <section class="viewport">
      <svg class="scene" viewBox="243 139 781 555" aria-label="模型">
        <path d="M334 329v6l580 158 15-13v-5L348 316z" fill="#fff"/>
        <path d="M914 488v5l15-14v-5z" fill="#9a9a9a" stroke="#333" stroke-width="1"/>
        <path d="M334 329v6l580 158v-6" fill="none" stroke="#111" stroke-width="1.300"/>
        <path d="M334 329.500 914 488l15-14L348 316.500z" fill="none" stroke="#555" stroke-width="1.200"/>
        <path d="M638 395.500 625 408.500" stroke="#777" stroke-width="1.200"/>
        <g fill="#777"><circle cx="334" cy="329.500" r="2.600"/><circle cx="348" cy="316.500" r="2.600"/><circle cx="638" cy="395.500" r="2.600"/><circle cx="625" cy="408.500" r="2.600"/><circle cx="929" cy="475" r="2.600"/><circle cx="914" cy="487.500" r="2.600"/></g>
        <g stroke="#1010d0" fill="#1010d0"><path d="M928.500 387V366M928.500 387l8 2M924.500 387h8M928.500 383v8M925.500 384l6 6M931.500 384l-6 6" stroke-width="1.100"/><path d="m926 367 2.500-7 2.500 7zM935.500 386.500l7.500 4.500-8.500.5z" stroke-width=".6"/></g>
        <g stroke-linecap="round">
          <path d="m283 636 24 5.500" stroke="#b02525" stroke-width="3.400"/><path d="m301 636 12 7-13 2z" fill="#d83030"/>
          <path d="m283 636-8 7" stroke="#14147c" stroke-width="3.400"/><path d="m270 642 8 2-1 5-8 1z" fill="#1717c8"/>
          <path d="M283 635v-14" stroke="#17691b" stroke-width="3.400"/><path d="m278.500 621 4.500-10 4.500 10-4.500 2z" fill="#259a2a"/>
        </g>
        <g class="axis"><text x="277" y="609" fill="#258a2a">Y</text><text x="307" y="648" fill="#e02020">X</text><text x="263" y="656" fill="#1717d8">Z</text></g>
      </svg>
      <div class="view-tools">
        <button aria-label="整屏显示"><svg class="ico"><use href="#v-fit"/></svg></button>
        <button aria-label="局部放大"><svg class="ico"><use href="#v-area"/></svg></button>
        <button aria-label="上一视图"><svg class="ico"><use href="#v-prev"/></svg></button>
        <button aria-label="剖面视图"><svg class="ico"><use href="#v-section"/></svg></button>
        <button aria-label="视图定向"><svg class="ico"><use href="#v-orient"/></svg></button><i class="sep"><i class="caret"></i></i>
        <button aria-label="显示样式"><svg class="ico"><use href="#v-style"/></svg></button><i class="sep"><i class="caret"></i></i>
        <button aria-label="隐藏/显示项目"><svg class="ico"><use href="#v-eye"/></svg></button><i class="sep"><i class="caret"></i></i>
        <button aria-label="编辑外观"><svg class="ico"><use href="#v-edit"/></svg></button>
        <button aria-label="应用布景"><svg class="ico"><use href="#v-scene"/></svg></button><i class="sep"><i class="caret"></i></i>
        <button aria-label="视图设定"><svg class="ico"><use href="#v-monitor"/></svg></button><i class="sep"><i class="caret"></i></i>
      </div>
      <button class="confirm" aria-label="退出展平"><svg><use href="#p-flat"/></svg></button>
      <nav class="task-pane">
        <button class="active" aria-label="3DEXPERIENCE"><svg class="ico"><use href="#p-3dx"/></svg></button>
        <button aria-label="资源"><svg class="ico"><use href="#i-home"/></svg></button>
        <button aria-label="设计库"><svg class="ico"><use href="#p-books"/></svg></button>
        <button aria-label="文件探索器"><svg class="ico"><use href="#p-folder"/></svg></button>
        <button aria-label="视图调色板"><svg class="ico"><use href="#p-palette"/></svg></button>
        <button aria-label="外观"><svg class="ico-18"><use href="#t-globe"/></svg></button>
        <button aria-label="自定义属性"><svg class="ico"><use href="#t-props"/></svg></button>
      </nav>
      <button class="splitter" aria-label="收起面板"><i class="dot"></i></button>
      <span class="view-name">*上下二等角轴测</span>
    </section>
  </main>
</div>

<div class="model-tabs">
  <div class="pager">
    <button aria-label="第一个" disabled><svg viewBox="0 0 16 16"><path d="M3 3v10M12 3v10L5 8z"/></svg></button>
    <button aria-label="上一个" disabled><svg viewBox="0 0 16 16"><path d="M11 3v10L4 8z"/></svg></button>
    <button aria-label="下一个" disabled><svg viewBox="0 0 16 16"><path d="M5 3v10l7-5z"/></svg></button>
    <button aria-label="最后一个" disabled><svg viewBox="0 0 16 16"><path d="M13 3v10M4 3v10l7-5z"/></svg></button>
  </div>
  <button class="model active">模型</button><button class="model">运动算例 1</button>
</div>
<footer class="status">
  <svg class="ico-18 warn" aria-hidden="true"><use href="#s-warn"/></svg>
  <button class="units">MMGS<i class="caret-up"></i></button>
  <button class="tag" aria-label="标签"><svg class="ico-18"><use href="#s-tag"/></svg></button>
</footer>
</body>
</html>
```
FILE: styles.css
```css
* { box-sizing: border-box; }

body {
  margin: 0;
  min-height: 100vh;
  display: flex;
  flex-direction: column;
  background: #f7f7f7;
  color: #111;
  font: 13px/16px "Noto Sans CJK SC", sans-serif;
}

button {
  display: flex;
  align-items: center;
  justify-content: center;
  margin: 0;
  padding: 0;
  border: 0;
  background: none;
  color: inherit;
  font: inherit;
  white-space: nowrap;
}

input {
  min-width: 0;
  flex: 1;
  padding: 0;
  border: 0;
  outline: 0;
  background: none;
  font: inherit;
}

svg { display: block; flex: none; }
.sprite { position: absolute; width: 0; height: 0; }
.ico { width: 20px; height: 20px; }
.ico-14 { width: 14px; height: 14px; }
.ico-16 { width: 16px; height: 16px; }
.ico-18 { width: 18px; height: 18px; }
.ico-22 { width: 22px; height: 22px; }

.caret, .caret-up, .tri-right { width: 0; height: 0; flex: none; border: 3px solid transparent; }
.caret { border-top-color: #444; border-bottom: 0; }
.caret-up { border-bottom-color: #444; border-top: 0; }
.tri-right { border-width: 4px 0 4px 5px; border-left-color: #666; }
button:disabled .caret { border-top-color: #aaa; }
.dot { width: 6px; height: 6px; border: 1px solid #999; border-radius: 50%; background: #ddd; }

/* title bar */
.titlebar {
  display: flex;
  align-items: center;
  height: 35px;
  border-top: 1px solid #bbb;
  border-bottom: 1px solid #bdbdbd;
}
.brand {
  display: flex;
  align-items: center;
  align-self: stretch;
  width: 143px;
  padding-left: 4px;
  border-right: 1px solid #bdbdbd;
}
.ds { width: 24px; height: 24px; }
.wordmark { margin-left: 1px; color: #c8343a; font-size: 13px; font-style: italic; }
.brand-more { width: 12px; margin-left: auto; margin-right: 3px; }
.quick { display: flex; align-items: center; margin-left: 24px; }
.q { width: 24px; }
.pair { display: flex; }
.pair:nth-child(2) { margin-left: 6px; }
.drop { width: 20px; }
.drop-slim { width: 17px; }
.select-tool { display: flex; height: 30px; border: 1px solid #888; }
.select-main { width: 30px; border-right: 1px solid #888; background: #aeaeae; }
.select-drop { width: 13px; }
.wide { width: 30px; }
.gear-drop { width: 14px; }
.docname { margin-left: 4px; }
.search {
  display: flex;
  align-items: center;
  flex: 1;
  gap: 5px;
  height: 24px;
  min-width: 120px;
  margin: 0 3px 0 1px;
  padding: 0 4px 0 6px;
  border: 1px solid #bdbdbd;
  background: #fff;
}
.search input::placeholder { color: #666; opacity: 1; }
.search-drop { width: 8px; }
.search .caret { border-top-color: #888; }
.window-buttons { display: flex; padding-right: 3px; color: #444; }
.window-buttons button { width: 36px; }

/* ribbon */
.ribbon { display: flex; height: 82px; border-bottom: 1px solid #777; }
.ribbon button:disabled { color: #b4b4b4; }
.ribbon button:disabled svg { fill: #ececec; stroke: #bdbdbd; stroke-linejoin: round; }
.group { position: relative; display: flex; padding-left: 3px; }
.group::after { content: ""; width: 1px; margin: 2px 0; background: #c4c4c4; }
.last::after { display: none; }
.lead { padding: 0 0 0 8px; }
.flush { padding: 0; }
.stack { position: relative; display: flex; flex-direction: column; width: 90px; }
.stack-wide { width: 100px; }
.stack-slim { width: 64px; }
.small { justify-content: flex-start; gap: 6px; height: 26px; }
.big {
  flex-direction: column;
  justify-content: flex-start;
  width: 50px;
  padding-top: 5px;
  line-height: 13px;
}
.big svg { margin-bottom: -1px; }
.big-slim { width: 38px; }
.caret-end { margin-top: 28px; }
.fold { padding-left: 1px; }
.fold .small { padding-left: 2px; }
.fold .pressed { padding-left: 1px; border: 1px solid #666; background: #adadad; }
.highlight {
  position: absolute;
  top: 43px;
  left: -17px;
  width: 92px;
  height: 44px;
  border: 3px solid #e63a30;
  border-radius: 3px;
  z-index: 2;
}
.collapse { width: 28px; align-self: flex-end; height: 26px; margin-left: auto; }

/* document area */
.workspace { flex: 1; display: flex; flex-direction: column; background: #c5c8d3; }
.tabrow { display: flex; justify-content: space-between; height: 22px; }
.tabs { display: flex; }
.tabs button { width: 56px; border: solid #888; border-width: 0 1px 1px 0; background: #d1d1d1; }
.tabs .active { background: #f7f7f7; border-bottom-color: #f7f7f7; }
.tabs .tab-wide { width: auto; padding: 0 7px; font-size: 12px; }
.doc-buttons { display: flex; align-items: flex-end; padding-right: 7px; color: #8e929c; }
.doc-buttons button { width: 26px; height: 14px; }

.split { flex: 1; display: flex; }
.panel {
  display: flex;
  flex-direction: column;
  width: 243px;
  padding-right: 2px;
  border-left: 1px solid #bbb;
  border-right: 1px solid #8a8a8a;
  background: #f7f7f7;
  font-family: "Inter", "Noto Sans CJK SC", sans-serif;
  font-size: 12px;
}
.grip {
  display: flex;
  align-items: center;
  justify-content: center;
  height: 16px;
  margin: 4px 0;
  border: solid #c4c4c4;
  border-width: 1px 0;
}
.panel-tabs { display: flex; height: 26px; padding-left: 1px; border-bottom: 1px solid #aaa; }
.panel-tabs button { width: 40px; border: 1px solid #999; border-width: 1px 1px 0 0; background: #d1d1d1; }
.panel-tabs .active { background: #f7f7f7; }
.panel-tabs .more { width: auto; flex: 1; padding-left: 18px; border: 0; background: none; }
.filter {
  display: flex;
  align-items: center;
  height: 26px;
  margin: 0 3px 0 4px;
  padding-left: 1px;
  border: 1px solid #bbb;
}
.root { display: flex; align-items: center; gap: 3px; height: 22px; padding-left: 3px; white-space: nowrap; }
.tree { margin: 0; padding: 0; list-style: none; }
.tree li { display: flex; align-items: center; height: 22px; }
.tree svg { margin-right: 4px; }
.twist { width: 20px; height: 22px; margin-right: 5px; flex: none; }
.child { padding-left: 23px; }
.caret-tree { border-width: 5px 4px 0; border-top-color: #666; }
.rollback { height: 3px; background: #3f8db0; }

/* graphics area */
.viewport { position: relative; flex: 1; min-width: 0; }
.scene { position: absolute; inset: 0; width: 100%; height: 100%; }
.axis { font: 12px "Liberation Serif", serif; }
.view-tools { position: relative; display: flex; justify-content: center; padding: 5px 6px 0 0; }
.view-tools button { width: 26px; }
.sep { display: flex; align-items: center; width: 14px; justify-content: center; }
.sep .caret { border-top-color: #8d919c; }
.confirm { position: absolute; top: 39px; right: 36px; }
.confirm svg { width: 54px; height: 46px; }
.task-pane {
  position: absolute;
  top: 28px;
  right: 0;
  border: 1px solid #999;
  border-width: 1px 0 0 1px;
}
.task-pane button { width: 25px; height: 24px; border-bottom: 1px solid #999; background: #d4d4d4; }
.task-pane .active { background: #fafafa; }
.splitter {
  position: absolute;
  top: 247px;
  left: -1px;
  width: 9px;
  height: 39px;
  border: 1px solid #8a8a8a;
  border-left: 0;
  background: #f7f7f7;
}
.view-name { position: absolute; left: 12px; bottom: 2px; font-size: 14px; font-weight: bold; }

/* bottom bars */
.model-tabs { display: flex; height: 16px; border: solid #888; border-width: 1px 0; }
.pager { display: flex; width: 67px; padding-left: 2px; }
.pager button { flex: 1; border: solid #888; border-width: 0 1px 0 0; background: #b9b9b9; }
.pager svg { width: 12px; height: 12px; fill: #919191; stroke: #919191; }
.model { padding: 0 9px 0 12px; line-height: 14px; }
.model:not(.active) { padding: 0 15px 0 7px; border: solid #888; border-width: 0 1px; background: #d6d6d6; }
.status {
  display: flex;
  align-items: center;
  justify-content: flex-end;
  height: 19px;
  border-bottom: 1px solid #cfdfe8;
}
.warn { margin-right: 69px; }
.units { gap: 15px; }
.tag { margin: 0 2px 0 26px; }
```
